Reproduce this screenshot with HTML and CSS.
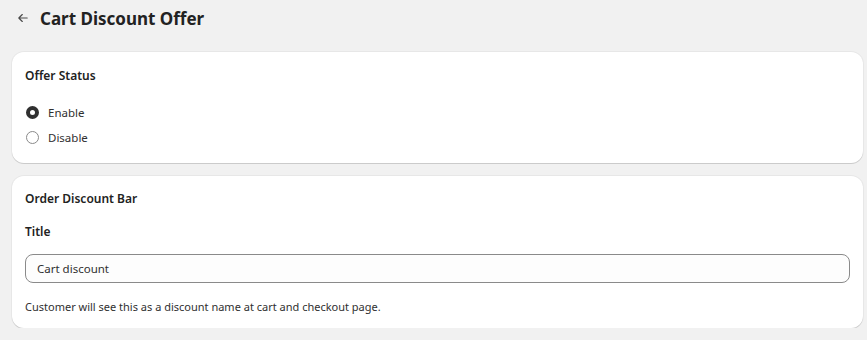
FILE: index.html
```html
<!DOCTYPE html>
<html lang="en">
<head>
  <meta charset="UTF-8">
  <title>Cart Discount Offer</title>
  <link rel="stylesheet" href="styles.css">
</head>
<body>
  <div class="page">
    <div class="page-header">
      <button class="back-button" aria-label="Back">
        <svg width="14" height="14" viewBox="0 0 20 20"><path d="M16 10H4.5M9 5l-5 5 5 5" fill="none" stroke="#4a4a4a" stroke-width="1.6" stroke-linecap="round" stroke-linejoin="round"/></svg>
      </button>
      <h1>Cart Discount Offer</h1>
    </div>

    <div class="card card-status">
      <h2>Offer Status</h2>
      <div class="choice-list">
        <label class="choice">
          <input type="radio" name="status" checked>
          <span class="radio"></span>
          <span>Enable</span>
        </label>
        <label class="choice">
          <input type="radio" name="status">
          <span class="radio"></span>
          <span>Disable</span>
        </label>
      </div>
    </div>

    <div class="card card-bar">
      <h2>Order Discount Bar</h2>
      <label class="field-label" for="title">Title</label>
      <input class="text-field" id="title" type="text" value="Cart discount">
      <p class="help-text">Customer will see this as a discount name at cart and checkout page.</p>
    </div>
  </div>
</body>
</html>
```

FILE: styles.css
```css
body {
  margin: 0;
  background: #f1f1f1;
  color: #303030;
  font-family: 'Noto Sans', 'Open Sans', sans-serif;
  font-size: 11px;
}
.page {
  padding: 0 4px 0 12px;
  display: flex;
  flex-direction: column;
  gap: 13px;
}
.page-header {
  display: flex;
  align-items: center;
  gap: 10px;
  height: 36px;
  padding-left: 4px;
  margin-bottom: 3px;
}
.back-button {
  border: none;
  background: none;
  padding: 0;
  width: 14px;
  height: 14px;
  cursor: pointer;
}
h1 {
  margin: 0;
  font-size: 17px;
  font-weight: 700;
  color: #222;
}
.card {
  background: #fff;
  border-radius: 12px;
  box-shadow: 0 1px 0 rgba(0,0,0,0.12), 0 0 0 1px rgba(0,0,0,0.04);
  padding: 16px 13px 13px 13px;
  display: flex;
  flex-direction: column;
}
.card-status {
  padding-bottom: 17px;
}
.card-bar {
  padding-top: 15px;
}
h2 {
  margin: 0;
  font-size: 12px;
  font-weight: 600;
  line-height: 16px;
  color: #222;
}
.choice-list {
  display: flex;
  flex-direction: column;
  gap: 7px;
  margin-top: 19px;
}
.choice {
  display: flex;
  align-items: center;
  gap: 9px;
  height: 18px;
  font-size: 11.5px;
  cursor: pointer;
}
.choice input {
  display: none;
}
.radio {
  width: 13px;
  height: 13px;
  box-sizing: border-box;
  border-radius: 50%;
  border: 1px solid #8a8a8a;
  margin-left: 1px;
}
.choice input:checked + .radio {
  border: 4px solid #303030;
}
.field-label {
  margin-top: 17px;
  font-size: 12px;
  font-weight: 600;
  line-height: 16px;
  color: #222;
}
.text-field {
  margin-top: 14px;
  height: 29px;
  box-sizing: border-box;
  border: 1px solid #8a8a8a;
  border-radius: 8px;
  background: #fdfdfd;
  padding: 0 11px;
  font-family: inherit;
  font-size: 11.5px;
  color: #303030;
}
.help-text {
  margin: 16px 0 0;
  font-size: 11px;
  line-height: 16px;
}
```
